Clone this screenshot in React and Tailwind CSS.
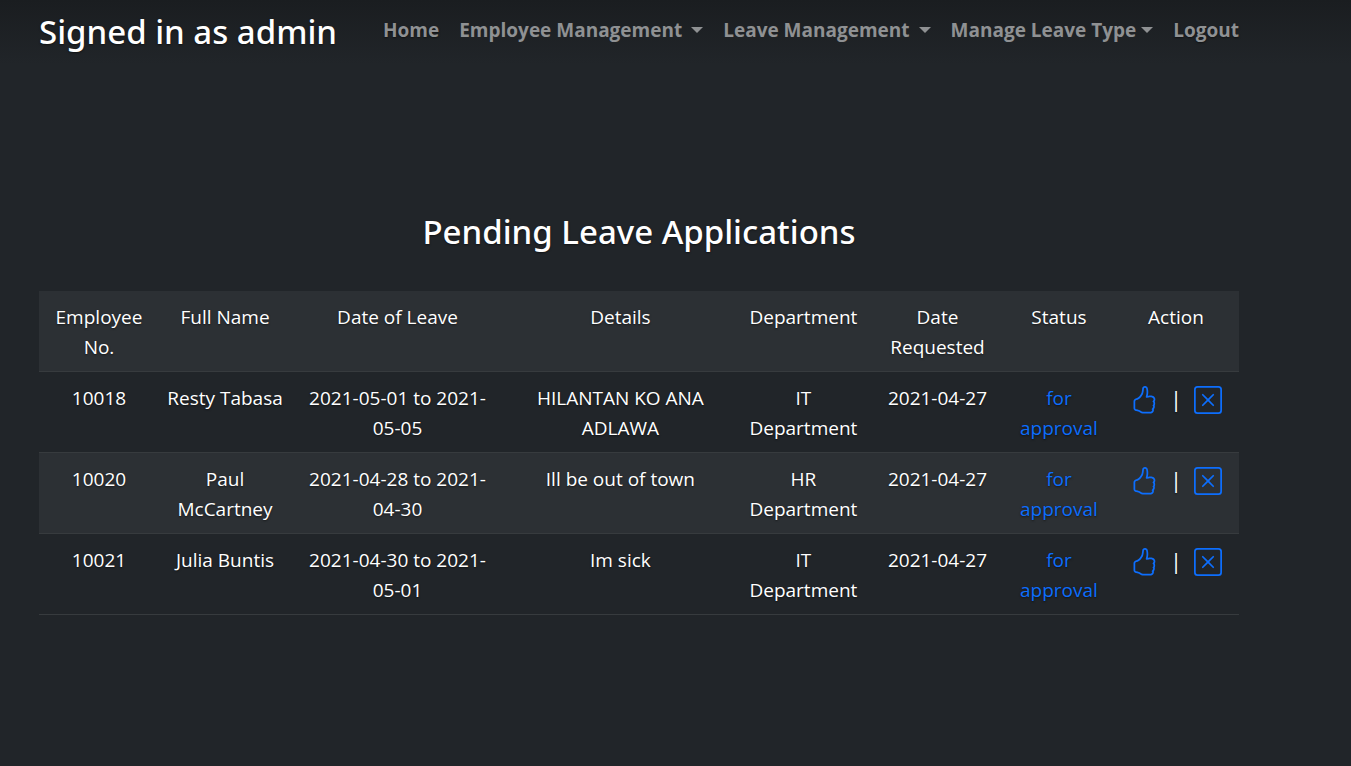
import { BsHandThumbsUp, BsXSquare } from "react-icons/bs";

const links = [
  { label: "Home" },
  { label: "Employee Management", menu: true, spaced: true },
  { label: "Leave Management", menu: true, spaced: true },
  { label: "Manage Leave Type", menu: true },
  { label: "Logout" },
];

const columns = [
  { label: "Employee No.", width: "w-[10%]" },
  { label: "Full Name", width: "w-[11%]" },
  { label: "Date of Leave", width: "w-[17.75%]" },
  { label: "Details", width: "w-[19.4%]" },
  { label: "Department", width: "w-[11.1%]" },
  { label: "Date Requested", width: "w-[11.25%]" },
  { label: "Status", width: "w-[9%]" },
  { label: "Action", width: "w-[10.5%]" },
];

const rows = [
  ["10018", "Resty Tabasa", "2021-05-01 to 2021-05-05", "HILANTAN KO ANA ADLAWA", "IT Department", "2021-04-27"],
  ["10020", "Paul McCartney", "2021-04-28 to 2021-04-30", "Ill be out of town", "HR Department", "2021-04-27"],
  ["10021", "Julia Buntis", "2021-04-30 to 2021-05-01", "Im sick", "IT Department", "2021-04-27"],
];

const linkStyle = "flex items-center text-[#8f9193]";
const cellStyle = "px-2 pt-[11px] pb-[9px] align-top";
const headingStyle = "font-['Noto_Sans',sans-serif] text-[33px] leading-[42px] font-medium";

function Nav() {
  return (
    <nav className="flex flex-wrap gap-x-5 text-[19px] leading-[30px] font-bold">
      {links.map(({ label, menu, spaced }) =>
        menu ? (
          <button key={label} type="button" aria-haspopup="true" className={linkStyle}>
            {label}
            <svg viewBox="0 0 12 6" aria-hidden="true" className={spaced ? "ml-[9px] h-[6px] w-3" : "ml-[5px] h-[6px] w-3"}>
              <path d="M0 0h12L6 6z" fill="currentColor" />
            </svg>
          </button>
        ) : (
          <a key={label} href="#" className={linkStyle}>
            {label}
          </a>
        )
      )}
    </nav>
  );
}

export default function App() {
  return (
    <div className="min-h-screen bg-[#212529] bg-[linear-gradient(#1a1d20,#212529_64px)] font-['Open_Sans','Noto_Sans',sans-serif] text-white [text-shadow:0_1px_2px_rgba(0,0,0,0.5)]">
      <div className="ml-[39px] max-w-[1200px]">
        <header className="flex items-start justify-between pt-[11px]">
          <h1 className={headingStyle}>Signed in as admin</h1>
          <div className="pt-1">
            <Nav />
          </div>
        </header>
        <main className="pt-[158px] text-center">
          <h2 className={headingStyle}>Pending Leave Applications</h2>
          <table className="mt-[38px] w-full table-fixed border-collapse text-[19px] leading-[30px]">
            <thead>
              <tr className="border-b border-[#373b3e] bg-[#2c3034]">
                {columns.map(({ label, width }) => (
                  <th key={label} scope="col" className={`${width} ${cellStyle} font-normal`}>
                    {label}
                  </th>
                ))}
              </tr>
            </thead>
            <tbody>
              {rows.map((row) => (
                <tr key={row[0]} className="border-b border-[#373b3e] even:bg-[#2c3034]">
                  {row.map((cell, i) => (
                    <td key={i} className={cellStyle}>
                      {cell}
                    </td>
                  ))}
                  <td className={`${cellStyle} text-[#0d6efd]`}>for approval</td>
                  <td className={cellStyle}>
                    <div className="flex items-start justify-center gap-3 pt-[3px]">
                      <button type="button" aria-label="Approve" className="text-[#0d6efd]">
                        <BsHandThumbsUp className="size-7" />
                      </button>
                      <span className="text-[22px] leading-6">|</span>
                      <button type="button" aria-label="Reject" className="text-[#0d6efd]">
                        <BsXSquare className="size-7" />
                      </button>
                    </div>
                  </td>
                </tr>
              ))}
            </tbody>
          </table>
        </main>
      </div>
    </div>
  );
}
